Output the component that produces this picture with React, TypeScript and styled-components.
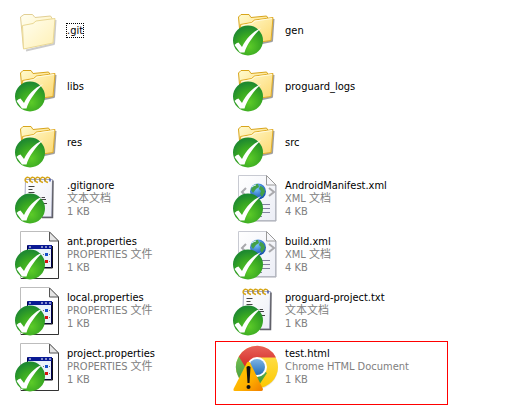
import React from "react";
import styled, { createGlobalStyle } from "styled-components";

const GlobalStyle = createGlobalStyle`
  body {
    margin: 0;
    background: #fff;
    font-family: "DejaVu Sans Condensed", "Noto Sans CJK SC", sans-serif;
    font-size: 11px;
    line-height: 13px;
    color: #000;
  }
`;

const FileGrid = styled.ul`
  display: grid;
  grid-template-columns: repeat(auto-fill, 218px);
  grid-auto-rows: 56px;
  margin: 0;
  padding: 2px 0 17px 12px;
  list-style: none;
`;

const FileTile = styled.li<{ $marked?: boolean }>`
  position: relative;
  display: flex;
  align-items: center;
  gap: 7px;

  &::after {
    content: "";
    display: ${(p) => (p.$marked ? "block" : "none")};
    position: absolute;
    inset: 3px 0 -11px -15px;
    border: 1px solid #f00;
  }
`;

const Icon = styled.svg`
  flex: none;
  width: 48px;
  height: 56px;
`;

const Details = styled.div`
  display: flex;
  flex-direction: column;
  align-items: flex-start;
  white-space: nowrap;
`;

const FileName = styled.span<{ $focused?: boolean }>`
  outline: ${(p) => (p.$focused ? "1px dotted #000" : "none")};
`;

const Meta = styled.span`
  color: #808080;
`;

const Defs = styled.svg`
  display: block;
  width: 0;
  height: 0;
`;

function Gradients() {
  return (
    <Defs aria-hidden="true">
      <defs>
        <linearGradient id="folder" x1="0" y1="0" x2="1" y2="1">
          <stop offset="0" stopColor="#fffbd0" />
          <stop offset="1" stopColor="#fdd66a" />
        </linearGradient>
        <linearGradient id="paleFolder" x1="0" y1="0" x2="1" y2="1">
          <stop offset="0" stopColor="#fffef0" />
          <stop offset="1" stopColor="#fff0b4" />
        </linearGradient>
        <radialGradient id="green" cx="0.55" cy="0.7" r="0.65">
          <stop offset="0" stopColor="#5ccb28" />
          <stop offset="0.6" stopColor="#38a722" />
          <stop offset="1" stopColor="#1f8a30" />
        </radialGradient>
        <linearGradient id="paper" x1="0" y1="0" x2="1" y2="1">
          <stop offset="0" stopColor="#ffffff" />
          <stop offset="1" stopColor="#eceef6" />
        </linearGradient>
        <radialGradient id="globe" cx="0.4" cy="0.3" r="0.7">
          <stop offset="0" stopColor="#7cc8ff" />
          <stop offset="1" stopColor="#1450b0" />
        </radialGradient>
        <linearGradient id="red" x1="0" y1="0" x2="0" y2="1">
          <stop offset="0" stopColor="#e8635a" />
          <stop offset="1" stopColor="#d0201c" />
        </linearGradient>
        <linearGradient id="yellow" x1="0" y1="0" x2="0" y2="1">
          <stop offset="0" stopColor="#ffe45c" />
          <stop offset="1" stopColor="#fcc800" />
        </linearGradient>
        <linearGradient id="leaf" x1="0" y1="0" x2="0" y2="1">
          <stop offset="0" stopColor="#74bf55" />
          <stop offset="1" stopColor="#37943a" />
        </linearGradient>
        <linearGradient id="blue" x1="0" y1="0" x2="0" y2="1">
          <stop offset="0" stopColor="#7db4e4" />
          <stop offset="1" stopColor="#256eb8" />
        </linearGradient>
        <linearGradient id="warning" x1="0" y1="0" x2="1" y2="1">
          <stop offset="0" stopColor="#ffd000" />
          <stop offset="0.6" stopColor="#ffb000" />
          <stop offset="1" stopColor="#f07c00" />
        </linearGradient>
      </defs>
    </Defs>
  );
}

function CheckBadge() {
  return (
    <g>
      <circle cx="18" cy="38.500" r="15" fill="url(#green)" />
      <path d="M4.500 43q2-2.500 4-2.500L12 45C16 37 22 30 31 26C24 33 17 42 14.500 50.500H10z" fill="#fff" />
    </g>
  );
}

function PaleFolder() {
  return (
    <g strokeLinejoin="round">
      <path d="M43.500 18l-1.500 24-28 6.500" fill="none" stroke="#999" strokeWidth="2" opacity="0.5" />
      <path d="M8.500 15l3.500-2.500h8.500l2.500 3 15.500-1.500 2 3-3 20-26 9.500z" fill="url(#paleFolder)" stroke="#e2cf94" />
      <path d="M10.500 23.500l10.500-2 3-2.500 19-2.500-2 24.500-29.500 6z" fill="url(#paleFolder)" stroke="#ead894" />
    </g>
  );
}

function Folder() {
  return (
    <g strokeLinejoin="round">
      <path d="M43.500 17l-1.500 22-12 2.500" fill="none" stroke="#777" strokeWidth="2" opacity="0.7" />
      <path d="M8.500 15l2.500-2.500h8l2 3 15.500-1.500 2 3v20l-28 1z" fill="url(#folder)" stroke="#d8a51c" />
      <path d="M10.500 22.500l11-2 3-2.500 18.500-2.500-2 23-29 4z" fill="url(#folder)" stroke="#e0ac27" />
      <path d="M12 23.500l10-2 3-2.500 17-2.500" fill="none" stroke="#fffbe0" />
    </g>
  );
}

function Notepad() {
  return (
    <g>
      <path d="M13.500 9.500h27l-1 37.500h-27z" fill="url(#paper)" stroke="#a8acc4" />
      <path d="M41 10.500l-.5 37H30" fill="none" stroke="#606068" strokeWidth="1.500" />
      <path d="M16.500 16.500h6M16.500 19.500h4M16.500 22.500h6M19 27.500h14M22 29.500h12M27 33.500h8" stroke="#454545" />
      {[16, 21, 26, 31, 36].map((x) => (
        <g key={x} fill="none">
          <path d={`M${x} 12.500q-4-1-2.500-4q3-2.500 4.500 .5`} stroke="#d6a515" strokeWidth="1.500" />
          <path d={`M${x + 2} 8.500v3`} stroke="#4656b0" strokeWidth="1.500" />
        </g>
      ))}
    </g>
  );
}

function PropertiesPage() {
  return (
    <g>
      <path d="M8.500 5.500h29l9 9v38h-38z" fill="#fff" stroke="#bdbdbd" />
      <path d="M46.500 15v37.500H9" fill="none" stroke="#333" />
      <path d="M37.500 6v9h9z" fill="#e5e5e5" stroke="#555" />
      <path d="M15.500 19.500h24v22h-24z" fill="#eaf2fa" stroke="#000050" />
      <path d="M16 19h24v4H16z" fill="#0a1a94" />
      <path d="M17 21h2M29 21h2M33 21h2M37 21h2" stroke="#fff" />
      <path d="M40.500 20v22H16" fill="none" stroke="#111" />
      <path d="M19 27h3v3h-3z" fill="#b00000" />
      <path d="M26 27h3v3h-3z" fill="#188018" />
      <path d="M33 27h3v3h-3z" fill="#174fc8" />
      <path d="M33 34h3v3h-3z" fill="#d81010" />
      <path d="M26 34h3v3h-3z" fill="#555" />
      <path d="M31 28.500h1M37 28.500h1M31 35.500h1M37 35.500h1M18 35.500h5" stroke="#777" />
    </g>
  );
}

function XmlPage() {
  return (
    <g>
      <path d="M8.500 5.500h28l9 9v36h-37z" fill="url(#paper)" stroke="#c8cad2" />
      <path d="M46 15v36H10" fill="none" stroke="#a5a8b2" />
      <path d="M36.500 5.500v9.500h9.500z" fill="#f7f7fa" stroke="#999" />
      <path d="M16 18l-4 4 4 4M39 18l5 4-5 4" fill="none" stroke="#a9a9ad" strokeWidth="2" />
      <circle cx="28" cy="21.500" r="8" fill="url(#globe)" />
      <path d="M21 20c1-4 4-6 7-6l1 3-3 2-3 4zM30 16c3 0 5 4 5 6l-3 5-2-3 1-3-2-2z" fill="#42a047" />
      <path d="M22 17q2-2 4-2" stroke="#d9f2ff" fill="none" />
      <path d="M28 34.500h12M28 38.500h12M28 42.500h12M28 46.500h4" stroke="#8282a0" />
    </g>
  );
}

function Chrome() {
  return (
    <g>
      <circle cx="27" cy="30" r="21" fill="#d0d0d0" opacity="0.6" />
      <circle cx="27" cy="29" r="21" fill="url(#yellow)" />
      <path d="M8.800 18.500A21 21 0 0 0 27 50l10-15-10-6z" fill="url(#leaf)" />
      <path d="M8.800 18.500A21 21 0 0 1 46 19.500H27l-9 14z" fill="url(#red)" />
      <circle cx="27" cy="29" r="10" fill="#fff" />
      <circle cx="27" cy="29" r="8" fill="url(#blue)" />
    </g>
  );
}

function WarningBadge() {
  return (
    <g>
      <path d="M17 24.500q1.500-1.500 3 0L33 51q0 2-1.500 2h-27Q3 53 3.500 51z" fill="url(#warning)" />
      <path d="M16.500 29q2-2 4 0l-1 16h-2z" fill="#111" />
      <circle cx="18.500" cy="49" r="2" fill="#111" />
    </g>
  );
}

const drawings = {
  paleFolder: PaleFolder,
  folder: Folder,
  text: Notepad,
  properties: PropertiesPage,
  xml: XmlPage,
  chrome: Chrome,
};

const badges = { check: CheckBadge, warning: WarningBadge };

type Entry = {
  name: string;
  kind: keyof typeof drawings;
  badge?: keyof typeof badges;
  size?: string;
  focused?: boolean;
  marked?: boolean;
};

const typeLabels: Partial<Record<Entry["kind"], string>> = {
  text: "文本文档",
  xml: "XML 文档",
  properties: "PROPERTIES 文件",
  chrome: "Chrome HTML Document",
};

const entries: Entry[] = [
  { name: ".git", kind: "paleFolder", focused: true },
  { name: "gen", kind: "folder", badge: "check" },
  { name: "libs", kind: "folder", badge: "check" },
  { name: "proguard_logs", kind: "folder", badge: "check" },
  { name: "res", kind: "folder", badge: "check" },
  { name: "src", kind: "folder", badge: "check" },
  { name: ".gitignore", kind: "text", badge: "check", size: "1 KB" },
  { name: "AndroidManifest.xml", kind: "xml", badge: "check", size: "4 KB" },
  { name: "ant.properties", kind: "properties", badge: "check", size: "1 KB" },
  { name: "build.xml", kind: "xml", badge: "check", size: "4 KB" },
  { name: "local.properties", kind: "properties", badge: "check", size: "1 KB" },
  { name: "proguard-project.txt", kind: "text", badge: "check", size: "1 KB" },
  { name: "project.properties", kind: "properties", badge: "check", size: "1 KB" },
  { name: "test.html", kind: "chrome", badge: "warning", size: "1 KB", marked: true },
];

function File({ entry }: { entry: Entry }) {
  const Drawing = drawings[entry.kind];
  const Badge = entry.badge && badges[entry.badge];
  const typeLabel = typeLabels[entry.kind];
  return (
    <FileTile $marked={entry.marked}>
      <Icon viewBox="0 0 48 56" aria-hidden="true">
        <Drawing />
        {Badge && <Badge />}
      </Icon>
      <Details>
        <FileName $focused={entry.focused}>{entry.name}</FileName>
        {typeLabel && <Meta>{typeLabel}</Meta>}
        {entry.size && <Meta>{entry.size}</Meta>}
      </Details>
    </FileTile>
  );
}

export default function App() {
  return (
    <>
      <GlobalStyle />
      <Gradients />
      <FileGrid>
        {entries.map((entry) => (
          <File key={entry.name} entry={entry} />
        ))}
      </FileGrid>
    </>
  );
}
